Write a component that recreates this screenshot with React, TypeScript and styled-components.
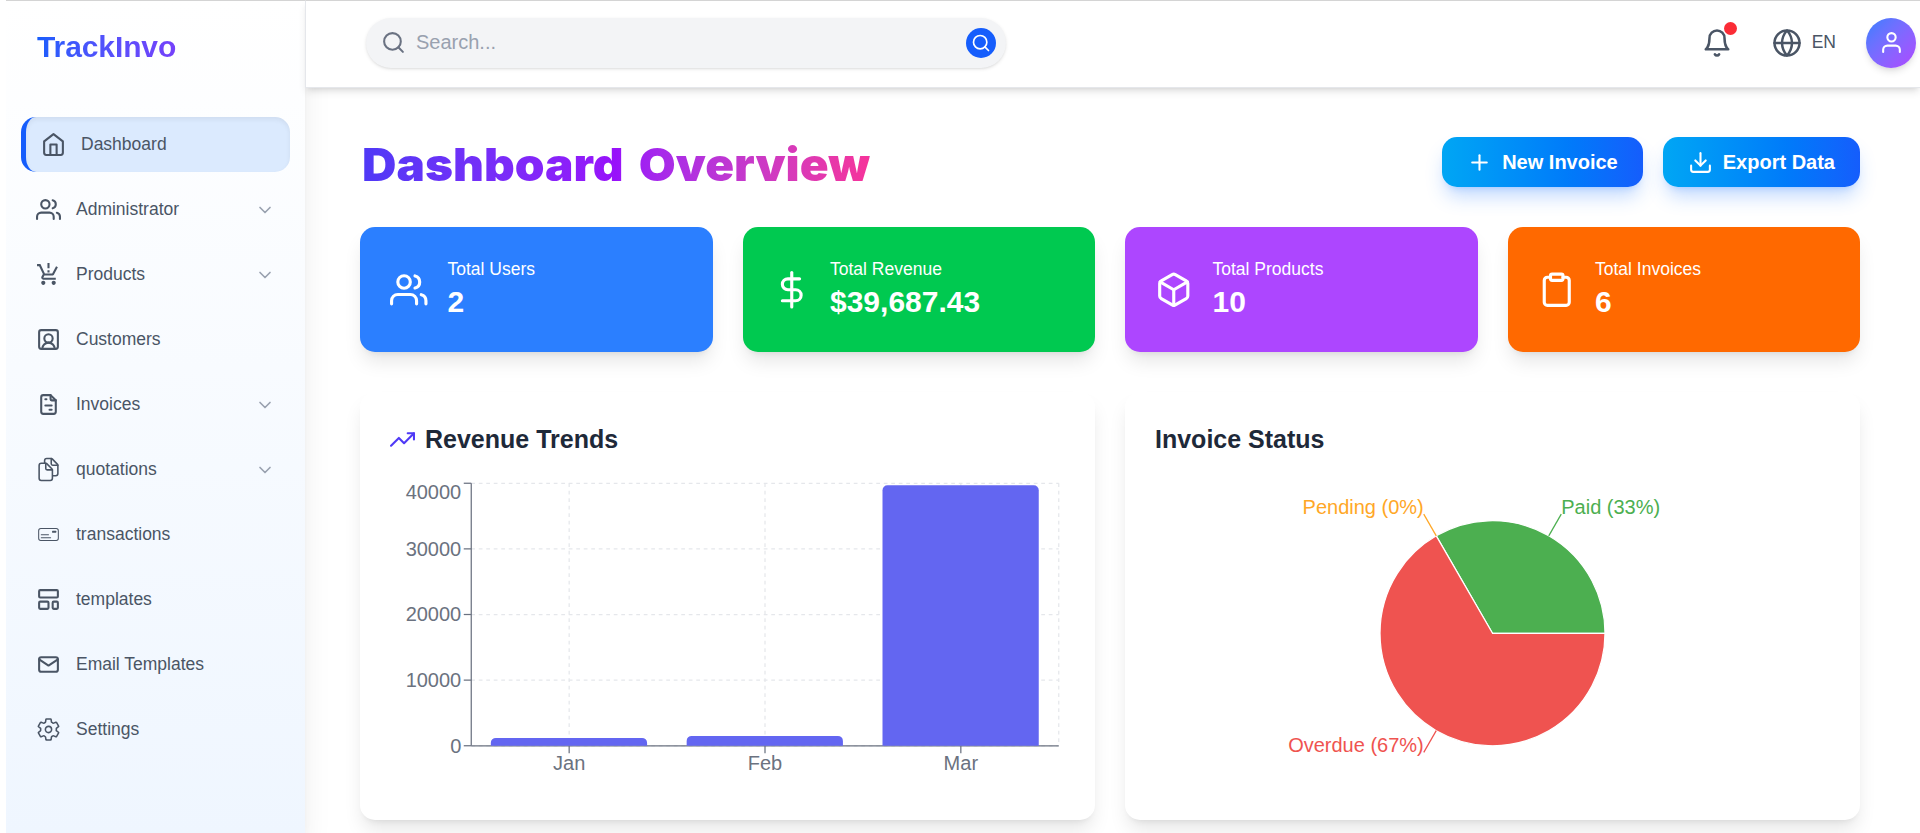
import React from "react";
import styled, { createGlobalStyle, css } from "styled-components";
import {
  FiHome, FiUsers, FiChevronDown, FiSearch, FiBell, FiGlobe, FiUser,
  FiPlus, FiDownload, FiDollarSign, FiBox, FiClipboard, FiTrendingUp,
} from "react-icons/fi";
import { MdProductionQuantityLimits } from "react-icons/md";
import { LuSquareUserRound, LuLayoutTemplate } from "react-icons/lu";
import { TbFileInvoice, TbMail } from "react-icons/tb";
import { IoDocumentsOutline, IoSettingsOutline } from "react-icons/io5";
import { CiMoneyCheck1 } from "react-icons/ci";

const GlobalStyle = createGlobalStyle`
  *, *::before, *::after { box-sizing: border-box; }
  body {
    margin: 0;
    background: #fff;
    font-family: "Liberation Sans", Arial, sans-serif;
    color: #1e2939;
    overflow: hidden;
  }
  svg { display: block; flex-shrink: 0; }
  h1, h2, p { margin: 0; }
`;

const Page = styled.div`
  display: flex;
  height: 833px;
  padding-left: 6px;
  overflow: hidden;
`;

const Sidebar = styled.aside`
  position: relative;
  z-index: 1;
  width: 299px;
  flex-shrink: 0;
  padding: 0 15px;
  border-top: 1px solid #d4d4d4;
  background: linear-gradient(to bottom, #fff, #eff6ff);
  box-shadow: 0 25px 31px -6px rgba(0, 0, 0, 0.1), 0 10px 12.5px -7.5px rgba(0, 0, 0, 0.1);
  clip-path: inset(0 -60px 0 0);
`;

const Logo = styled.div`
  margin: 23px 14px 48px 16px;
  line-height: 45px;
  font-size: 30px;
  font-weight: 700;
  letter-spacing: -0.1px;
  background: linear-gradient(to right in oklab, #155dfc, #9810fa);
  background-clip: text;
  -webkit-background-clip: text;
  color: transparent;
`;

const Nav = styled.nav`
  display: flex;
  flex-direction: column;
  gap: 10px;
`;

const NavItem = styled.a<{ $active?: boolean }>`
  display: flex;
  align-items: center;
  gap: 15px;
  height: 55px;
  padding: 0 15px;
  border-radius: 15px;
  font-size: 17.5px;
  color: #4a5565;
  ${(p) =>
    p.$active &&
    css`
      background: #dbeafe;
      border-left: 5px solid #155dfc;
      box-shadow: inset 0 2.5px 5px rgba(0, 0, 0, 0.06);
    `}
`;

const NavLabel = styled.span`
  flex: 1;
`;

const Chevron = styled(FiChevronDown)`
  color: #99a1af;
`;

const Main = styled.div`
  flex: 1;
  min-width: 0;
  display: flex;
  flex-direction: column;
`;

const Header = styled.header`
  position: relative;
  z-index: 2;
  display: flex;
  align-items: center;
  justify-content: space-between;
  height: 88px;
  flex-shrink: 0;
  padding: 0 4px 3px 60px;
  background: #fff;
  border-top: 1px solid #d4d4d4;
  border-left: 1px solid #e5e7eb;
  border-bottom: 1px solid #e5e7eb;
  box-shadow: 0 5px 7.5px -1px rgba(0, 0, 0, 0.1), 0 2.5px 5px -2.5px rgba(0, 0, 0, 0.1);
`;

const SearchBox = styled.div`
  display: flex;
  align-items: center;
  gap: 10px;
  width: 640px;
  height: 50px;
  padding: 0 10px 0 15px;
  border-radius: 25px;
  background: #f3f4f6;
  color: #6a7282;
  box-shadow: 0 1.25px 3.75px rgba(0, 0, 0, 0.1), 0 1.25px 2.5px -1.25px rgba(0, 0, 0, 0.1);
`;

const Placeholder = styled.span`
  flex: 1;
  font-size: 20px;
  color: #99a1af;
`;

const SearchButton = styled.span`
  display: grid;
  place-items: center;
  width: 30px;
  height: 30px;
  border-radius: 50%;
  background: #155dfc;
  color: #fff;
`;

const HeaderTools = styled.div`
  display: flex;
  align-items: center;
  color: #4a5565;
`;

const BellWrap = styled.div`
  position: relative;
  margin-right: 40px;
`;

const BellDot = styled.span`
  position: absolute;
  top: -6px;
  right: -5px;
  width: 13px;
  height: 13px;
  border-radius: 50%;
  background: #fb2c36;
`;

const Language = styled.div`
  display: flex;
  align-items: center;
  gap: 10px;
  margin-right: 30px;
  font-size: 17.5px;
`;

const Avatar = styled.div`
  display: grid;
  place-items: center;
  width: 50px;
  height: 50px;
  border-radius: 50%;
  color: #fff;
  background: linear-gradient(to bottom right in oklab, #2b7fff, #ad46ff);
  box-shadow: 0 5px 7.5px -1px rgba(0, 0, 0, 0.1), 0 2.5px 5px -2.5px rgba(0, 0, 0, 0.1);
`;

const Content = styled.main`
  padding: 49px 60px 0 55px;
`;

const TitleRow = styled.div`
  display: flex;
  align-items: center;
  justify-content: space-between;
  height: 50px;
  margin-bottom: 40.3px;
`;

const Title = styled.h1`
  font-family: "Arial Black", Inter, sans-serif;
  font-size: 45px;
  line-height: 56px;
  font-weight: 900;
  word-spacing: 5.5px;
  white-space: nowrap;
  padding-top: 5px;
  margin-left: 2px;
  transform: scaleX(1.06);
  transform-origin: left;
  background: linear-gradient(to right in oklab, #4f39f6, #9810fa, #f6339a);
  background-clip: text;
  -webkit-background-clip: text;
  color: transparent;
`;

const Actions = styled.div`
  display: flex;
  gap: 20px;
`;

const ActionButton = styled.button`
  display: flex;
  align-items: center;
  gap: 10px;
  height: 50px;
  padding: 0 25px;
  border: 0;
  border-radius: 15px;
  font: 700 20px "Liberation Sans", Arial, sans-serif;
  color: #fff;
  background: linear-gradient(to right in oklab, #00a6f4, #155dfc);
  box-shadow: 0 12.5px 18.75px -3.75px rgba(43, 127, 255, 0.3), 0 5px 7.5px -5px rgba(43, 127, 255, 0.3);
`;

const cardShadow = "0 12.5px 18.75px -3.75px rgba(0,0,0,0.1), 0 5px 7.5px -5px rgba(0,0,0,0.1)";

const Stats = styled.div`
  display: grid;
  grid-template-columns: repeat(4, 1fr);
  gap: 30px;
  margin-bottom: 40px;
`;

const StatCard = styled.div<{ $color: string }>`
  display: flex;
  align-items: center;
  gap: 20px;
  height: 125px;
  padding: 0 30px;
  border-radius: 15px;
  color: #fff;
  background: ${(p) => p.$color};
  box-shadow: ${cardShadow};
`;

const StatLabel = styled.p`
  font-size: 17.5px;
  line-height: 25px;
`;

const StatValue = styled.p`
  font-size: 30px;
  line-height: 40px;
  font-weight: 700;
`;

const Charts = styled.div`
  display: grid;
  grid-template-columns: 1fr 1fr;
  gap: 30px;
`;

const ChartCard = styled.section`
  height: 427.5px;
  padding: 30px;
  border-radius: 15px;
  background: #fff;
  box-shadow: ${cardShadow};
`;

const ChartTitle = styled.h2`
  display: flex;
  align-items: center;
  gap: 10px;
  margin-bottom: 20px;
  font-size: 25px;
  line-height: 35px;
  font-weight: 700;
  color: #1e2939;
  svg { color: #4f39f6; }
`;

const ChartSvg = styled.svg`
  width: 675px;
  height: 312.5px;
  font-size: 16px;
  overflow: visible;
`;

const navItems = [
  { label: "Dashboard", Icon: FiHome, active: true },
  { label: "Administrator", Icon: FiUsers, menu: true },
  { label: "Products", Icon: MdProductionQuantityLimits, menu: true },
  { label: "Customers", Icon: LuSquareUserRound },
  { label: "Invoices", Icon: TbFileInvoice, menu: true },
  { label: "quotations", Icon: IoDocumentsOutline, menu: true },
  { label: "transactions", Icon: CiMoneyCheck1 },
  { label: "templates", Icon: LuLayoutTemplate },
  { label: "Email Templates", Icon: TbMail },
  { label: "Settings", Icon: IoSettingsOutline },
];

const stats = [
  { label: "Total Users", value: "2", color: "#2b7fff", Icon: FiUsers },
  { label: "Total Revenue", value: "$39,687.43", color: "#00c950", Icon: FiDollarSign },
  { label: "Total Products", value: "10", color: "#ad46ff", Icon: FiBox },
  { label: "Total Invoices", value: "6", color: "#ff6900", Icon: FiClipboard },
];

const revenue = [
  { month: "Jan", value: 1200 },
  { month: "Feb", value: 1500 },
  { month: "Mar", value: 39687 },
];

const PLOT = { left: 65, right: 535, top: 5, bottom: 215 };
const MAX = 40000;

function RevenueChart() {
  const band = (PLOT.right - PLOT.left) / revenue.length;
  const yOf = (v: number) => PLOT.bottom - (v / MAX) * (PLOT.bottom - PLOT.top);
  const ticks = [0, 10000, 20000, 30000, 40000];
  const centers = revenue.map((_, i) => PLOT.left + band * (i + 0.5));
  return (
    <ChartSvg viewBox="0 0 540 250">
      <g stroke="#e5e7eb" strokeDasharray="3 3">
        {ticks.map((t) => (
          <line key={t} x1={PLOT.left} x2={PLOT.right} y1={yOf(t)} y2={yOf(t)} />
        ))}
        {[...centers, PLOT.right].map((x) => (
          <line key={x} x1={x} x2={x} y1={PLOT.top} y2={PLOT.bottom} />
        ))}
      </g>
      <g stroke="#6b7280">
        <line x1={PLOT.left} x2={PLOT.left} y1={PLOT.top} y2={PLOT.bottom} />
        <line x1={PLOT.left} x2={PLOT.right} y1={PLOT.bottom} y2={PLOT.bottom} />
        {ticks.map((t) => (
          <line key={t} x1={PLOT.left - 6} x2={PLOT.left} y1={yOf(t)} y2={yOf(t)} />
        ))}
        {centers.map((x) => (
          <line key={x} x1={x} x2={x} y1={PLOT.bottom} y2={PLOT.bottom + 6} />
        ))}
      </g>
      <g fill="#6b7280">
        {ticks.map((t) => (
          <text key={t} x={57} y={t === MAX ? 17.6 : yOf(t) + 5.5} textAnchor="end">{t}</text>
        ))}
        {revenue.map((r, i) => (
          <text key={r.month} x={centers[i]} y={234.2} textAnchor="middle">{r.month}</text>
        ))}
      </g>
      {revenue.map((r, i) => {
        const x = PLOT.left + band * (i + 0.1);
        const w = Math.floor(band * 0.8);
        const y = yOf(r.value);
        return (
          <path
            key={r.month}
            fill="#6366f1"
            d={`M${x},${y + 4}a4,4 0 0 1 4,-4h${w - 8}a4,4 0 0 1 4,4V${PLOT.bottom}h${-w}Z`}
          />
        );
      })}
    </ChartSvg>
  );
}

const slices = [
  { label: "Paid (33%)", color: "#4caf50", from: 0, to: 120 },
  { label: "Overdue (67%)", color: "#ef5350", from: 120, to: 360 },
  { label: "Pending (0%)", color: "#ffa726", from: 120, to: 120 },
];

function StatusChart() {
  const point = (deg: number, r: number) => {
    const a = (deg * Math.PI) / 180;
    return [270 + r * Math.cos(a), 125 - r * Math.sin(a)];
  };
  return (
    <ChartSvg viewBox="0 0 540 250">
      {slices.map((s) => {
        const [x1, y1] = point(s.from, 90);
        const [x2, y2] = point(s.to, 90);
        const large = s.to - s.from > 180 ? 1 : 0;
        return s.to > s.from ? (
          <path
            key={s.label}
            fill={s.color}
            stroke="#fff"
            d={`M270,125L${x1},${y1}A90,90 0 ${large} 0 ${x2},${y2}Z`}
          />
        ) : null;
      })}
      {slices.map((s) => {
        const mid = (s.from + s.to) / 2;
        const [x1, y1] = point(mid, 90);
        const [x2, y2] = point(mid, 110);
        return (
          <g key={s.label}>
            <line x1={x1} y1={y1} x2={x2} y2={y2} stroke={s.color} />
            <text x={x2} y={y2 - 0.2} fill={s.color} textAnchor={x2 > 270 ? "start" : "end"}>{s.label}</text>
          </g>
        );
      })}
    </ChartSvg>
  );
}

export default function App() {
  return (
    <>
      <GlobalStyle />
      <Page>
        <Sidebar>
          <Logo>TrackInvo</Logo>
          <Nav>
            {navItems.map(({ label, Icon, active, menu }) => (
              <NavItem key={label} $active={active}>
                <Icon size={25} />
                <NavLabel>{label}</NavLabel>
                {menu && <Chevron size={20} />}
              </NavItem>
            ))}
          </Nav>
        </Sidebar>
        <Main>
          <Header>
            <SearchBox>
              <FiSearch size={25} />
              <Placeholder>Search...</Placeholder>
              <SearchButton><FiSearch size={20} /></SearchButton>
            </SearchBox>
            <HeaderTools>
              <BellWrap>
                <FiBell size={30} />
                <BellDot />
              </BellWrap>
              <Language>
                <FiGlobe size={30} />
                <span>EN</span>
              </Language>
              <Avatar><FiUser size={25} /></Avatar>
            </HeaderTools>
          </Header>
          <Content>
            <TitleRow>
              <Title>Dashboard Overview</Title>
              <Actions>
                <ActionButton><FiPlus size={25} />New Invoice</ActionButton>
                <ActionButton><FiDownload size={25} />Export Data</ActionButton>
              </Actions>
            </TitleRow>
            <Stats>
              {stats.map(({ label, value, color, Icon }) => (
                <StatCard key={label} $color={color}>
                  <Icon size={37.5} />
                  <div>
                    <StatLabel>{label}</StatLabel>
                    <StatValue>{value}</StatValue>
                  </div>
                </StatCard>
              ))}
            </Stats>
            <Charts>
              <ChartCard>
                <ChartTitle><FiTrendingUp size={25} />Revenue Trends</ChartTitle>
                <RevenueChart />
              </ChartCard>
              <ChartCard>
                <ChartTitle>Invoice Status</ChartTitle>
                <StatusChart />
              </ChartCard>
            </Charts>
          </Content>
        </Main>
      </Page>
    </>
  );
}
